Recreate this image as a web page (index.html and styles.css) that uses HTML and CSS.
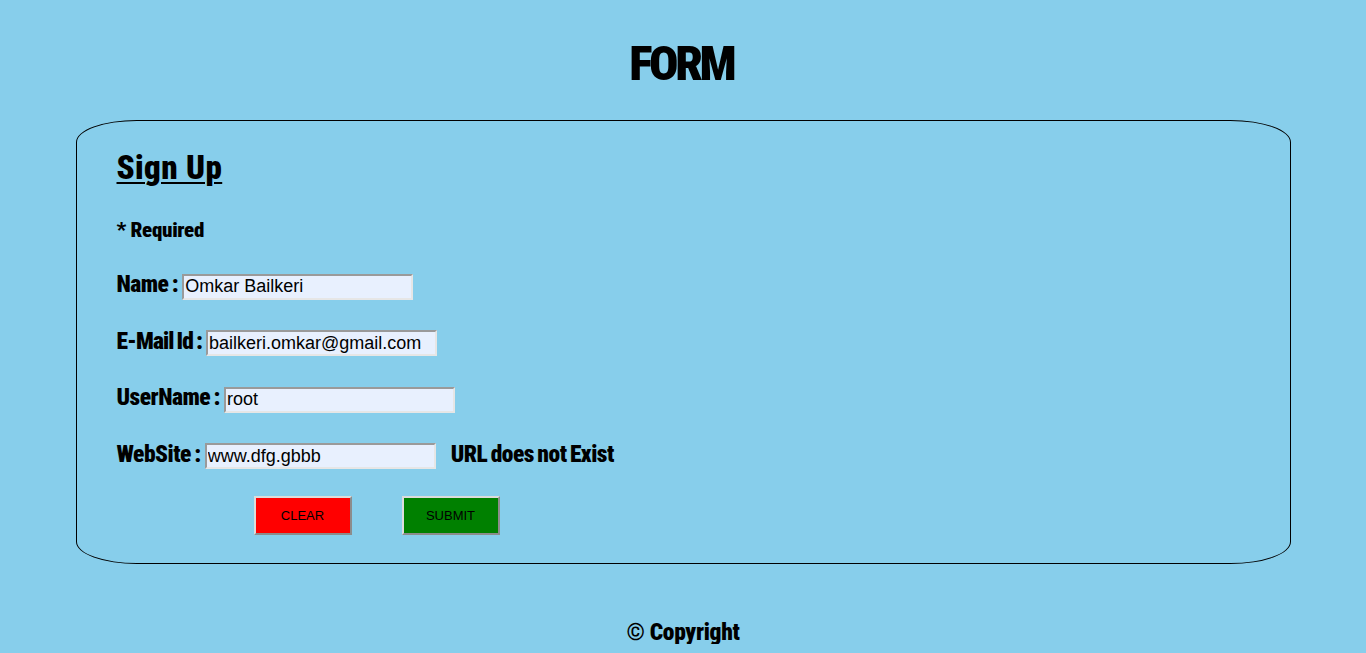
FILE: index.html
```html
<!DOCTYPE html>
<html>
<head>
<meta charset="utf-8">
<link rel="stylesheet" href="styles.css">
</head>
<body>
<h1 class="title">FORM</h1>
<div class="card">
  <h2 class="heading">Sign Up</h2>
  <p class="note">* Required</p>
  <form class="fields">
    <div class="row"><label class="label">Name :</label><input class="field" type="text" value="Omkar Bailkeri"></div>
    <div class="row"><label class="label label-tight">E-Mail Id :</label><input class="field" type="text" value="bailkeri.omkar@gmail.com"></div>
    <div class="row"><label class="label">UserName :</label><input class="field" type="text" value="root"></div>
    <div class="row"><label class="label">WebSite :</label><input class="field" type="text" value="www.dfg.gbbb"><span class="error">URL does not Exist</span></div>
    <div class="actions">
      <button class="btn btn-clear" type="button">CLEAR</button>
      <button class="btn btn-submit" type="button">SUBMIT</button>
    </div>
  </form>
</div>
<footer class="footer">© Copyright</footer>
</body>
</html>
```
FILE: styles.css
```css
html, body {
  background: #87ceeb;
}
body {
  margin: 8px;
  font-family: Roboto, "Open Sans", "DejaVu Sans Condensed", sans-serif;
  font-stretch: 75%;
  font-weight: 900;
  color: #000;
}
.title {
  margin: 31.2px 0 31.8px;
  padding-right: 3.5px;
  font-size: 49px;
  line-height: 49px;
  font-weight: 900;
  text-align: center;
  letter-spacing: -3.5px;
}
.card {
  width: 90%;
  margin: 0 auto;
  box-sizing: border-box;
  border: 1px solid #000;
  border-radius: 5%;
  padding: 31px 40px 28px;
}
.heading {
  margin: 0;
  font-size: 33px;
  line-height: 32px;
  font-weight: 900;
  letter-spacing: 0.4px;
  text-decoration: underline;
  text-decoration-thickness: 2px;
  text-underline-offset: 3px;
}
.note {
  margin: 35px 0 0;
  font-size: 21px;
  line-height: 22px;
  letter-spacing: -0.3px;
}
.fields {
  display: flex;
  flex-direction: column;
  gap: 30.5px;
  margin-top: 32.5px;
}
.row {
  display: flex;
  align-items: baseline;
  gap: 4px;
  height: 26px;
}
.label {
  font-size: 23.5px;
  line-height: 22px;
  letter-spacing: -0.5px;
  word-spacing: -1.5px;
}
.label-tight {
  letter-spacing: -0.9px;
}
.field {
  box-sizing: border-box;
  width: 231px;
  height: 26px;
  margin: 0;
  padding: 1px 1px;
  border-style: solid;
  border-width: 2px;
  border-color: #9a9a9a #e6e6e6 #e6e6e6 #9a9a9a;
  background: #e8f0fe;
  font-family: "Liberation Sans", Arial, sans-serif;
  font-stretch: 100%;
  font-weight: normal;
  font-size: 18px;
  color: #000;
}
.error {
  margin-left: 11px;
  font-size: 23.5px;
  line-height: 22px;
  letter-spacing: -0.5px;
  word-spacing: -1.5px;
}
.actions {
  display: flex;
  align-items: flex-start;
  gap: 50px;
  height: 39px;
  padding-left: 137px;
  margin-top: -3.5px;
}
.btn {
  box-sizing: border-box;
  width: 98px;
  height: 39px;
  margin: 0;
  padding: 0;
  border-style: solid;
  border-width: 2px;
  border-color: #dcdcdc #8c8c8c #8c8c8c #dcdcdc;
  font-family: "Liberation Sans", Arial, sans-serif;
  font-stretch: 100%;
  font-weight: normal;
  font-size: 13px;
  color: #000;
}
.btn-clear {
  background: #ff0000;
}
.btn-submit {
  background: #008000;
}
.footer {
  margin-top: 56px;
  text-align: center;
  font-size: 23.5px;
  line-height: 24px;
  letter-spacing: -0.3px;
}
```
